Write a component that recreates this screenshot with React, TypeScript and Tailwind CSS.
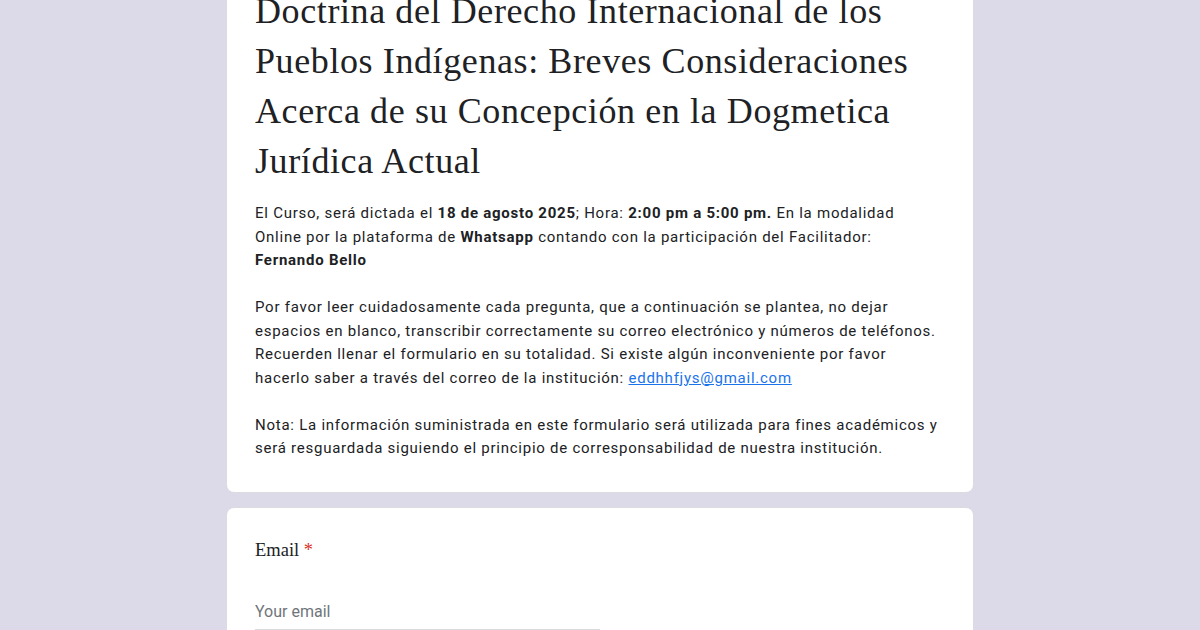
import React from 'react';

export default function App() {
  return (
    <div className="min-h-screen w-full bg-[#dcd9e9] overflow-hidden" style={{ height: 630 }}>
      <div className="w-[748px] mx-auto -mt-[39px] flex flex-col gap-[14px]">
        {/* Header card */}
        <div className="bg-white rounded-lg border border-[#dadce0] px-[28px] pt-6 pb-[31px]">
          <h1
            className="text-[36px] leading-[50px] tracking-[0.6px] text-[#202124]"
            style={{ fontFamily: '"Liberation Serif", "Times New Roman", serif' }}
          >
            Doctrina del Derecho Internacional de los Pueblos Indígenas: Breves Consideraciones Acerca de su Concepción en la Dogmetica Jurídica Actual
          </h1>
          <div
            className="mt-4 text-[15px] leading-[23.5px] tracking-[0.75px] text-[#202124]"
            style={{ fontFamily: 'Roboto, "Liberation Sans", Arial, sans-serif' }}
          >
            <p>
              El Curso, será dictada el <b className="font-bold">18 de agosto 2025</b>; Hora: <b className="font-bold">2:00 pm a 5:00 pm.</b> En la modalidad Online por la plataforma de <b className="font-bold">Whatsapp</b> contando con la participación del Facilitador: <b className="font-bold">Fernando Bello</b>
            </p>
            <br />
            <p>
              Por favor leer cuidadosamente cada pregunta, que a continuación se plantea, no dejar espacios en blanco, transcribir correctamente su correo electrónico y números de teléfonos. Recuerden llenar el formulario en su totalidad. Si existe algún inconveniente por favor hacerlo saber a través del correo de la institución: <a className="text-[#1a73e8] underline" href="#">eddhhfjys@gmail.com</a>
            </p>
            <br />
            <p>
              Nota: La información suministrada en este formulario será utilizada para fines académicos y será resguardada siguiendo el principio de corresponsabilidad de nuestra institución.
            </p>
          </div>
        </div>

        {/* Email question card */}
        <div className="bg-white rounded-lg border border-[#dadce0] px-[28px] pt-[30px] pb-8">
          <div
            className="text-[18.5px] leading-[24px] text-[#202124]"
            style={{ fontFamily: '"Liberation Serif", "Times New Roman", serif' }}
          >
            Email <span className="text-[#d93025]">*</span>
          </div>
          <div className="mt-[37px] w-[345px] border-b border-[#dadce0] pb-[6px]">
            <span
              className="text-[16px] leading-[20px] text-[#70757a]"
              style={{ fontFamily: 'Roboto, "Liberation Sans", Arial, sans-serif' }}
            >
              Your email
            </span>
          </div>
        </div>
      </div>
    </div>
  );
}
